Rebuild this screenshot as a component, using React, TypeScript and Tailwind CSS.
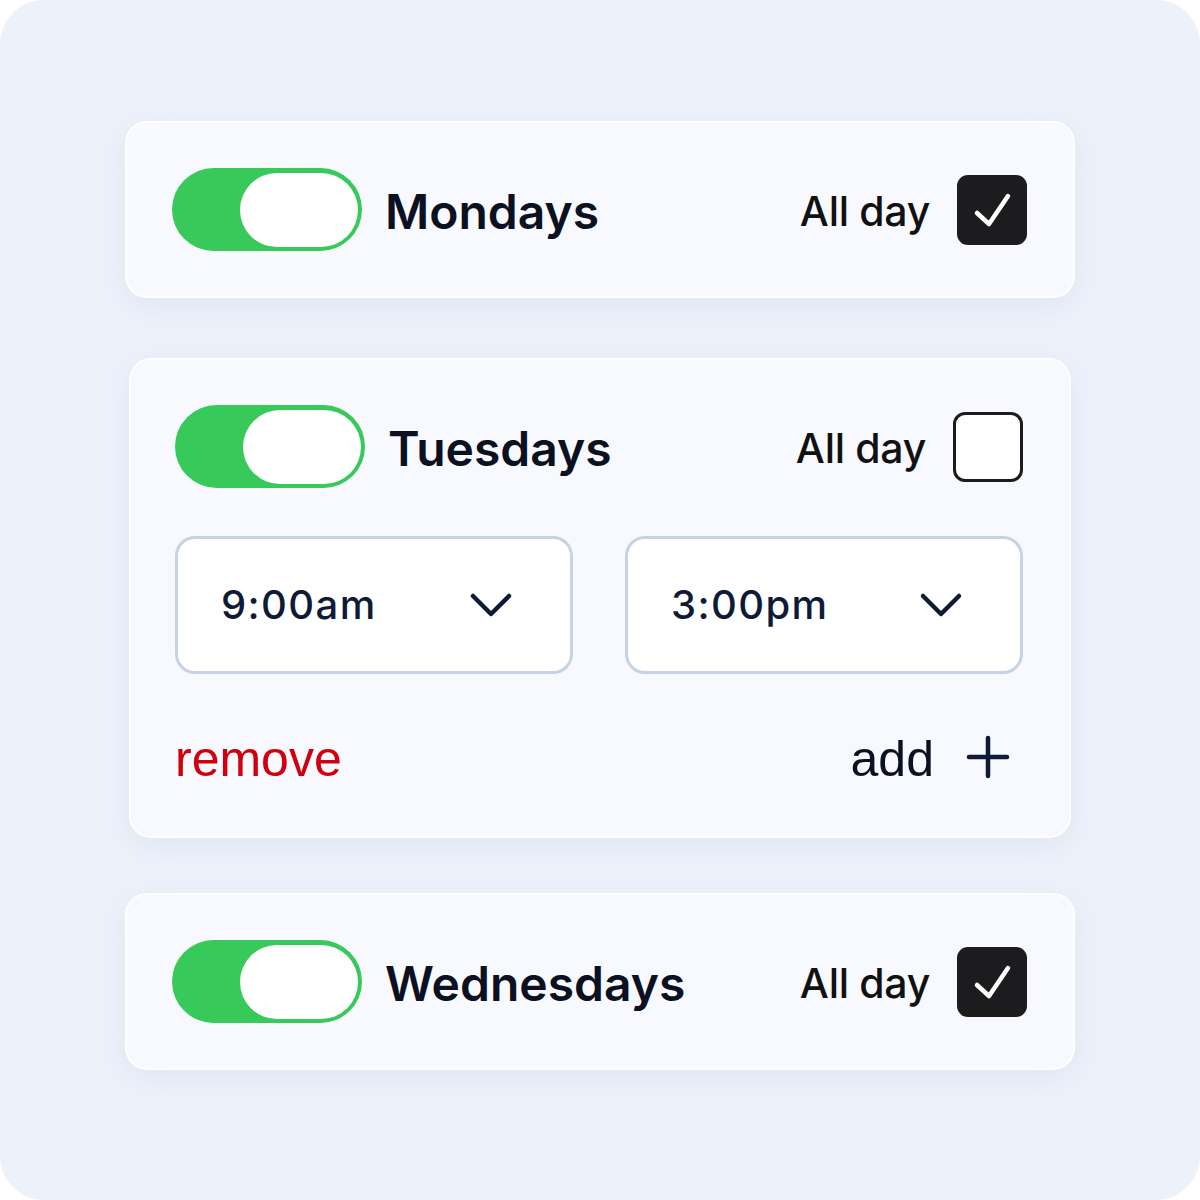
import React from "react";

const Toggle = () => (
  <div className="w-[190px] h-[83px] rounded-full bg-[#37c95a] flex items-center justify-end pr-[4px] shrink-0">
    <div className="w-[118px] h-[74px] rounded-full bg-white" />
  </div>
);

const Check = ({ checked }: { checked: boolean }) =>
  checked ? (
    <div className="w-[70px] h-[70px] rounded-[11px] bg-[#1c1c1e] shrink-0">
      <svg width="70" height="70" viewBox="0 0 70 70" fill="none">
        <path d="M20 38 L32 49 L51 21" stroke="white" strokeWidth="4.5" strokeLinecap="round" strokeLinejoin="round" />
      </svg>
    </div>
  ) : (
    <div className="w-[70px] h-[70px] rounded-[12px] bg-white border-[3px] border-[#1c1c1e] shrink-0" />
  );

const Header = ({ day, checked }: { day: string; checked: boolean }) => (
  <div className="flex items-center">
    <Toggle />
    <div className="ml-[23px] text-[48px] leading-none font-semibold text-[#0b1120] pt-[4px]">
      {day}
    </div>
    <div className="ml-auto flex items-center">
      <span className="text-[41px] leading-none font-medium text-[#111] tracking-[-0.3px] mr-[27px] pt-[4px]">All day</span>
      <Check checked={checked} />
    </div>
  </div>
);

const Chevron = () => (
  <svg width="44" height="30" viewBox="0 0 44 30" fill="none">
    <path d="M4 6 L22 24 L40 6" stroke="#0f1b36" strokeWidth="4.5" strokeLinecap="round" strokeLinejoin="round" />
  </svg>
);

const Select = ({ value }: { value: string }) => (
  <div className="w-[398px] h-[138px] rounded-[20px] bg-white border-[3px] border-[#c7d2e5] flex items-center pl-[43px] pr-[57px]">
    <span className="text-[40px] font-medium text-[#0f1b36] tracking-[1.4px]">{value}</span>
    <span className="ml-auto"><Chevron /></span>
  </div>
);

export default function App() {
  return (
    <div className="w-[1200px] h-[1200px] bg-white" style={{ fontFamily: "Inter, 'Noto Sans', sans-serif" }}>
      <div className="w-full h-full rounded-[44px] bg-[#edf1fa] flex flex-col items-center pt-[121px]">
        <div className="w-[950px] h-[177px] rounded-[22px] bg-[#f8f9fe] border-2 border-white shadow-[0_8px_30px_rgba(150,165,200,0.15)] pl-[45px] pr-[46px] flex flex-col justify-center">
          <Header day="Mondays" checked={true} />
        </div>
        <div className="w-[942px] h-[480px] mt-[60px] rounded-[22px] bg-[#f8f9fe] border-2 border-white shadow-[0_8px_30px_rgba(150,165,200,0.15)] pl-[44px] pr-[46px] pt-[45px]">
          <Header day="Tuesdays" checked={false} />
          <div className="flex justify-between mt-[48px]">
            <Select value="9:00am" />
            <Select value="3:00pm" />
          </div>
          <div className="flex items-center mt-[62px] h-[50px]" style={{ fontFamily: "'Liberation Sans', Arial, sans-serif" }}>
            <span className="text-[50px] leading-none text-[#d1000e] -mt-[4px]">remove</span>
            <span className="ml-auto text-[50px] leading-none text-[#0b1120] mr-[32px] -mt-[4px]">add</span>
            <svg width="44" height="44" viewBox="0 0 44 44" fill="none" className="mr-[13px] -mt-[8px]">
              <path d="M22 3 V41 M3 22 H41" stroke="#0f1b36" strokeWidth="4.5" strokeLinecap="round" />
            </svg>
          </div>
        </div>
        <div className="w-[950px] h-[177px] mt-[55px] rounded-[22px] bg-[#f8f9fe] border-2 border-white shadow-[0_8px_30px_rgba(150,165,200,0.15)] pl-[45px] pr-[46px] flex flex-col justify-center">
          <Header day="Wednesdays" checked={true} />
        </div>
      </div>
    </div>
  );
}
